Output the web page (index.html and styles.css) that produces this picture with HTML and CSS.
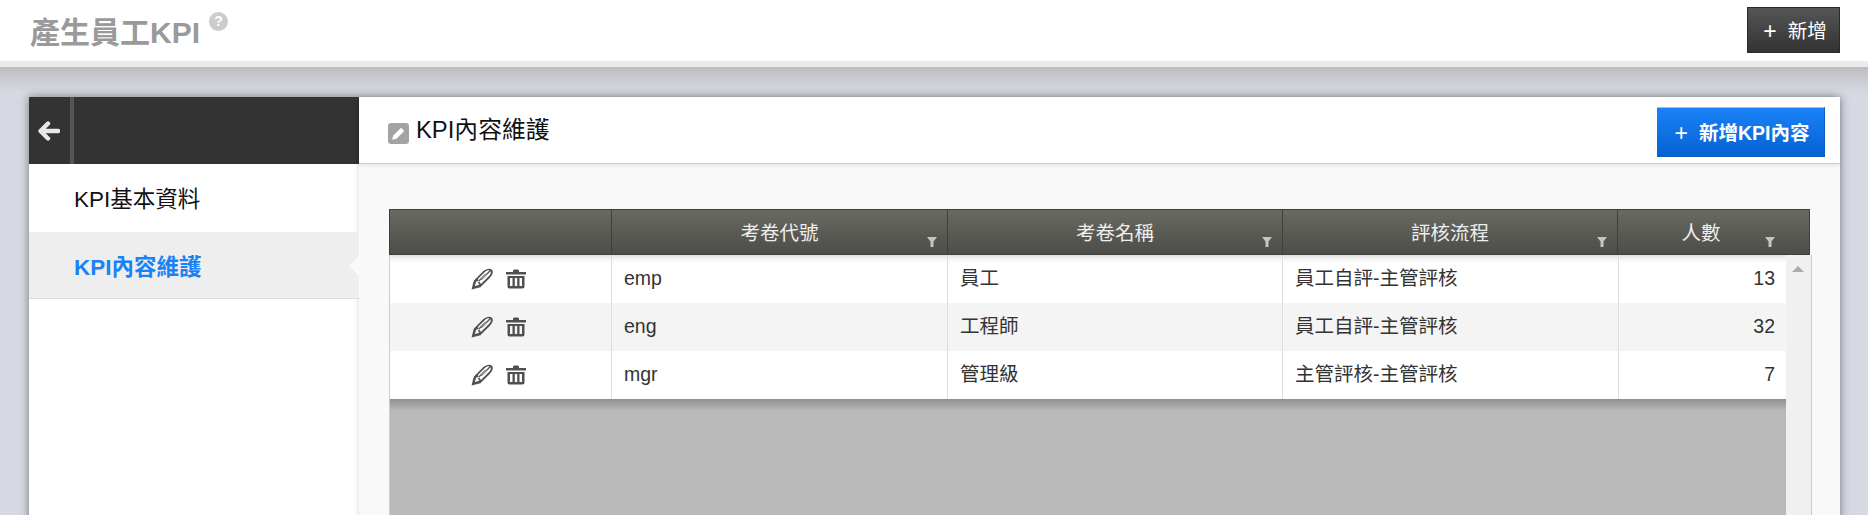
FILE: index.html
```html
<!DOCTYPE html>
<html lang="zh-Hant">
<head>
    <meta charset="UTF-8">
    <title>產生員工KPI</title>
    <link rel="stylesheet" href="styles.css">
</head>
<body>
    <!-- Barra superior -->
    <header class="topbar">
        <h1 class="page-title">產生員工KPI<span class="help-icon">?</span></h1>
        <button class="btn-dark"><span class="plus">+</span>新增</button>
    </header>

    <div class="card">
        <!-- Menu lateral -->
        <aside class="side">
            <div class="side-head">
                <span class="back-btn">
                    <svg width="22" height="20" viewBox="0 0 22 20"><path d="M10 2.500 2.500 10 10 17.500M3.500 10H20" fill="none" stroke="#e8e8e8" stroke-width="4.400" stroke-linecap="round" stroke-linejoin="round"/></svg>
                </span>
            </div>
            <a class="side-item">KPI基本資料</a>
            <a class="side-item active">KPI內容維護</a>
        </aside>

        <!-- Contenido -->
        <main class="content">
            <div class="content-head">
                <h2 class="content-title">
                    <svg class="title-icon" width="21" height="21" viewBox="0 0 20 20">
                        <rect width="20" height="20" rx="3" fill="#a3a3a3"/>
                        <path d="M4 16l1-4 7.500-7.500 3 3L8 15z" fill="#fff"/>
                    </svg>
                    KPI內容維護
                </h2>
                <button class="btn-blue"><span class="plus">+</span>新增KPI內容</button>
            </div>

            <div class="content-body">
                <div class="grid">
                    <div class="grid-head">
                        <div class="th col-act"></div>
                        <div class="th col-code">考卷代號<i class="filter"></i></div>
                        <div class="th col-name">考卷名稱<i class="filter"></i></div>
                        <div class="th col-flow">評核流程<i class="filter"></i></div>
                        <div class="th col-num">人數<i class="filter"></i></div>
                    </div>
                    <div class="grid-body">
                        <div class="rows">
                            <div class="row">
                                <div class="td col-act">
                                    <svg class="ico" width="22" height="22"><use href="#ico-edit"/></svg>
                                    <svg class="ico" width="20" height="20"><use href="#ico-trash"/></svg>
                                </div>
                                <div class="td col-code">emp</div>
                                <div class="td col-name">員工</div>
                                <div class="td col-flow">員工自評-主管評核</div>
                                <div class="td col-num">13</div>
                            </div>
                            <div class="row alt">
                                <div class="td col-act">
                                    <svg class="ico" width="22" height="22"><use href="#ico-edit"/></svg>
                                    <svg class="ico" width="20" height="20"><use href="#ico-trash"/></svg>
                                </div>
                                <div class="td col-code">eng</div>
                                <div class="td col-name">工程師</div>
                                <div class="td col-flow">員工自評-主管評核</div>
                                <div class="td col-num">32</div>
                            </div>
                            <div class="row">
                                <div class="td col-act">
                                    <svg class="ico" width="22" height="22"><use href="#ico-edit"/></svg>
                                    <svg class="ico" width="20" height="20"><use href="#ico-trash"/></svg>
                                </div>
                                <div class="td col-code">mgr</div>
                                <div class="td col-name">管理級</div>
                                <div class="td col-flow">主管評核-主管評核</div>
                                <div class="td col-num">7</div>
                            </div>
                            <div class="empty"></div>
                        </div>
                        <div class="scrollbar"><i class="arrow-up"></i></div>
                    </div>
                </div>
            </div>
        </main>
    </div>

    <!-- Iconos compartidos -->
    <svg class="defs" width="0" height="0">
        <symbol id="ico-edit" viewBox="0 0 20 20">
            <path d="M.5 19.500 2.500 11.500 11 3C14 .2 17.500 0 19 1.500 20.500 3 20 6.200 17 9L8.500 17.500zM3.500 16.500 7.800 15 6.200 13.500 14 5.800 13.200 5 5.300 12.800 4.800 11.800zM9 14.500 16.800 6.800C18 5.500 18.300 3.800 17.800 3L9.800 11 9 10.200 16.800 2.300C15.600 1.800 14 2.300 12.800 3.500L6.200 10z" fill="#505050" fill-rule="evenodd"/>
        </symbol>
        <symbol id="ico-trash" viewBox="0 0 20 20">
            <path d="M7 1.500 8 .5h4l1 1V3h7v2.500H0V3h7zM1.500 7h17v10.500c0 1.200-.8 2-2 2h-13c-1.200 0-2-.8-2-2zM4 9v8h2.500V9zM8.800 9v8h2.400V9zM13.500 9v8H16V9z" fill="#505050" fill-rule="evenodd"/>
        </symbol>
    </svg>
</body>
</html>
```

FILE: styles.css
```css
/* Base */
* {
    box-sizing: border-box;
}
body {
    margin: 0;
    height: 515px;
    overflow: hidden;
    font-family: "Liberation Sans", "Noto Sans CJK TC", sans-serif;
    background: linear-gradient(#bcbdc2 67px, #d6d9e2 92px);
    color: #333;
}
.defs {
    position: absolute;
}

/* Barra superior */
.topbar {
    height: 67px;
    background: #fff;
    border-bottom: 6px solid #ebebeb;
    display: flex;
    justify-content: space-between;
    padding: 7px 28px 0 30px;
}
.page-title {
    margin: 0;
    font-size: 30px;
    line-height: 52px;
    font-weight: bold;
    color: #9a9a9a;
    display: flex;
    align-items: flex-start;
}
.help-icon {
    width: 19px;
    height: 19px;
    margin: 5px 0 0 9px;
    border-radius: 50%;
    background: #ccc;
    color: #fff;
    font-size: 14px;
    line-height: 19px;
    text-align: center;
}
.btn-dark {
    width: 93px;
    height: 46px;
    border: 1px solid #2a2a2a;
    background: linear-gradient(#555, #333);
    color: #fff;
    font-family: inherit;
    font-size: 19.500px;
    padding: 0 0 0 3px;
}
.plus {
    font-weight: normal;
    font-size: 23px;
    margin-right: 11px;
    vertical-align: -1px;
}

/* Tarjeta principal */
.card {
    margin: 30px 28px 0 29px;
    height: 500px;
    display: flex;
    background: #fff;
    box-shadow: 0 0 9px rgba(0, 0, 0, .45);
}

/* Menu lateral */
.side {
    width: 330px;
    flex-shrink: 0;
    background: #fff;
}
.side-head {
    height: 67px;
    background: #333;
    display: flex;
}
.back-btn {
    width: 45px;
    border-right: 4px solid #555;
    display: flex;
    align-items: center;
    justify-content: center;
    padding-right: 2px;
}
.side-item {
    display: block;
    height: 68px;
    padding-left: 45px;
    font-size: 22.500px;
    line-height: 72px;
    color: #111;
    position: relative;
}
.side-item.active {
    height: 67px;
    background: #eee;
    border-bottom: 1px solid #ddd;
    color: #1a82f7;
    font-weight: bold;
}
.side-item.active::after {
    content: "";
    position: absolute;
    right: 0;
    top: 24px;
    border: 10px solid transparent;
    border-left-width: 0;
    border-right-color: #f9f9f9;
}

/* Contenido */
.content {
    flex: 1;
    min-width: 0;
    background: #f9f9f9;
    box-shadow: -3px 0 5px -2px rgba(0, 0, 0, .12);
}
.content-head {
    height: 67px;
    background: #fff;
    border-bottom: 1px solid #ccc;
    box-shadow: 0 2px 4px rgba(0, 0, 0, .08);
    display: flex;
    align-items: flex-start;
    justify-content: space-between;
    padding: 10px 15px 0 29px;
}
.content-title {
    margin: 0;
    font-size: 23.800px;
    font-weight: normal;
    line-height: 46px;
    color: #111;
    display: flex;
    align-items: center;
}
.title-icon {
    margin: 7px 7px 0 0;
}
.btn-blue {
    width: 168px;
    height: 50px;
    border: 1px solid #0a5fc0;
    border-top-color: #bbb;
    border-left: 0;
    background: linear-gradient(#1a82f7, #0562d2);
    color: #fff;
    font-family: inherit;
    font-size: 19.500px;
    font-weight: bold;
    padding: 0 0 0 3px;
}
.content-body {
    padding: 45px 30px 0;
}

/* Tabla */
.grid-head {
    display: flex;
    height: 46px;
    border: 1px solid #3f3f3c;
    background: linear-gradient(#6a6a62, #4c4c49);
    position: relative;
    z-index: 1;
}
.th {
    position: relative;
    color: #eee;
    font-size: 19.500px;
    text-align: center;
    line-height: 46px;
    border-right: 1px solid #3f3f3c;
}
.th:last-child {
    border-right: 0;
    padding-right: 25px;
}
.filter {
    position: absolute;
    right: 10px;
    bottom: 7px;
    width: 10px;
    height: 10px;
    background: #c4c4c4;
    clip-path: polygon(0 0, 100% 0, 65% 45%, 65% 100%, 35% 100%, 35% 45%);
}
.th:last-child .filter {
    right: 34px;
}
.col-act {
    width: 222px;
}
.col-code {
    width: 336px;
}
.col-name {
    width: 335px;
}
.col-flow {
    width: 335px;
}
.col-num {
    flex: 1;
}
.grid-body {
    display: flex;
    height: 300px;
    margin-right: -2px;
    border-left: 1px solid #ccc;
    border-right: 1px solid #ccc;
}
.rows {
    flex: 1;
    min-width: 0;
}
.row {
    display: flex;
    height: 48px;
    background: #fff;
    box-shadow: inset 0 10px 8px -10px rgba(0, 0, 0, .25);
}
.row.alt {
    background: #f4f4f4;
    box-shadow: none;
}
.row + .row {
    box-shadow: none;
}
.td {
    font-size: 19.500px;
    line-height: 46px;
    padding: 0 12px;
    border-right: 1px solid #ddd;
    white-space: nowrap;
}
.row .col-flow {
    width: 336px;
}
.row .col-act {
    display: flex;
    align-items: center;
    justify-content: center;
    gap: 13px;
    padding: 0 4px 0 0;
}
.row .col-num {
    border-right: 0;
    text-align: right;
    padding-right: 11px;
}
.empty {
    height: 160px;
    background: linear-gradient(#8f8f8f, #b9b9b9 12px);
}
.scrollbar {
    width: 25px;
    flex-shrink: 0;
    background: #f0f0f0;
    position: relative;
}
.arrow-up {
    position: absolute;
    top: 11px;
    left: 6px;
    border: 6px solid transparent;
    border-top: 0;
    border-bottom-color: #aaa;
}
```
